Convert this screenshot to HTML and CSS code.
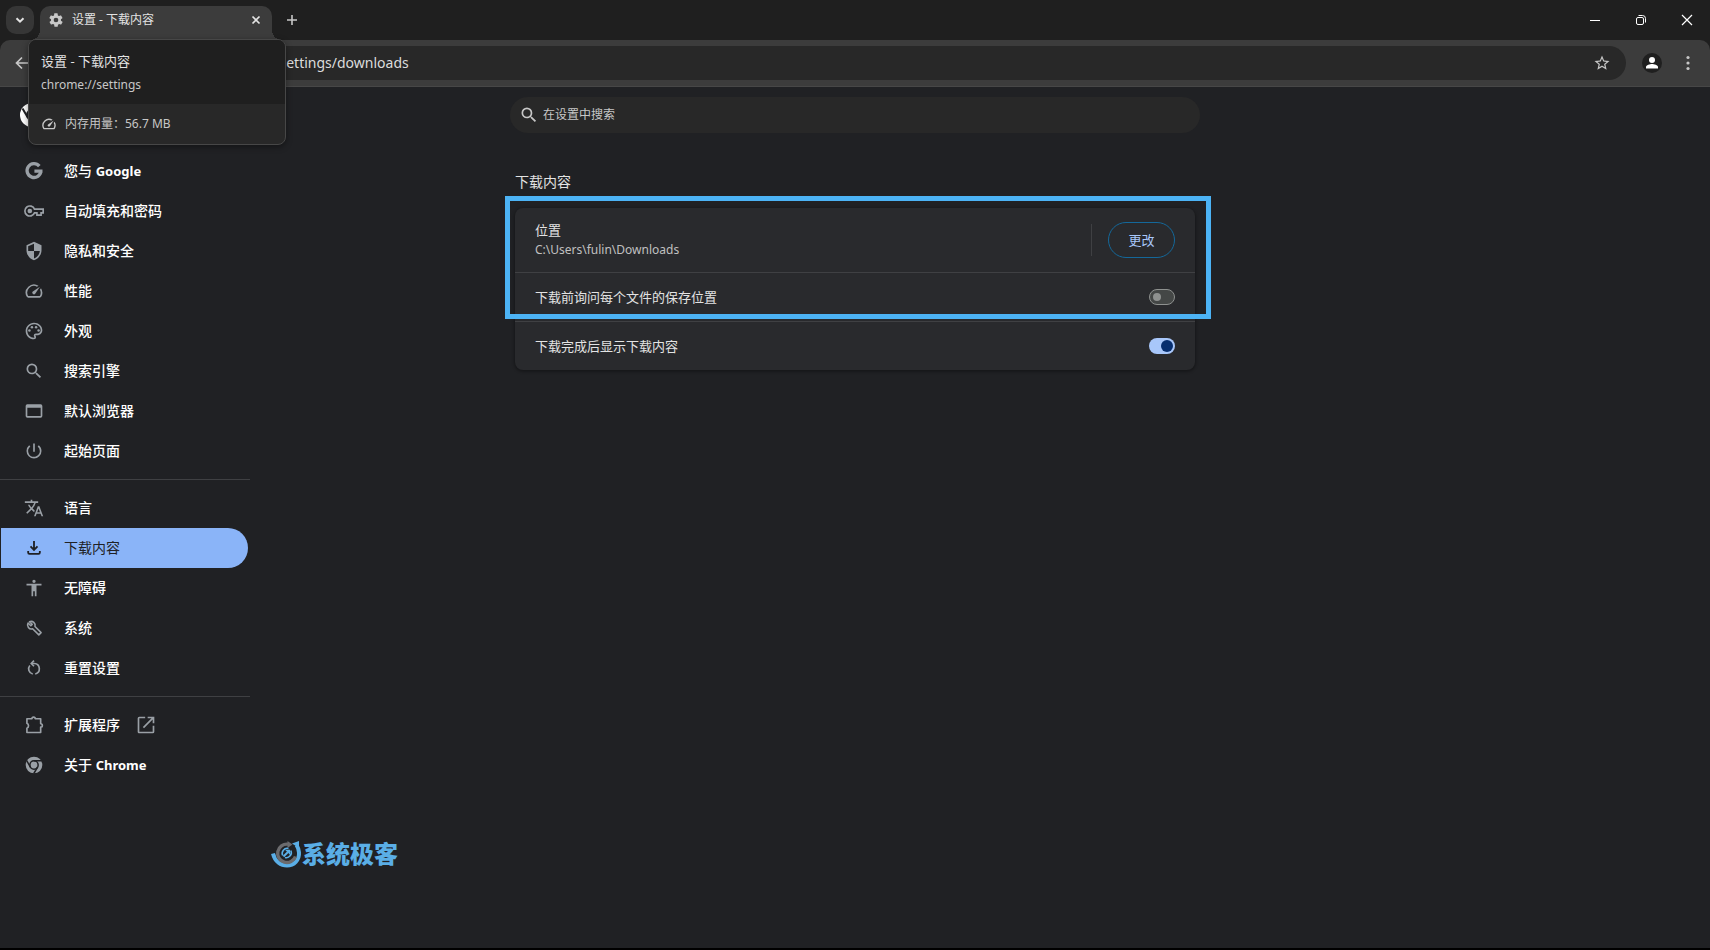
FILE: index.html
```html
<!DOCTYPE html>
<html lang="zh-CN">
<head>
<meta charset="utf-8">
<title>设置 - 下载内容</title>
<link rel="stylesheet" href="styles.css">
</head>
<body>
<div class="window">
  <header class="tabstrip">
    <button class="tab-search" aria-label="搜索标签页"><svg width="16" height="16" viewBox="0 0 16 16"><path d="M4.500 6.200 8 9.700l3.500-3.500" fill="none" stroke="currentColor" stroke-width="2"/></svg></button>
    <div class="tab">
      <svg class="tab-icon" width="16" height="16" viewBox="0 0 24 24"><path fill="currentColor" d="M19.400 13c0-.3.1-.6.1-1s0-.7-.1-1l2.100-1.600c.2-.2.2-.4.1-.6l-2-3.500c-.1-.2-.4-.3-.6-.2l-2.500 1c-.5-.4-1.100-.7-1.700-1l-.4-2.600c0-.3-.2-.5-.5-.5h-4c-.2 0-.5.2-.5.4l-.4 2.700c-.6.2-1.100.6-1.700 1l-2.500-1c-.2-.1-.5 0-.6.200l-2 3.500c-.1.2-.1.5.1.6L4.600 11c0 .3-.1.6-.1 1s0 .7.1 1l-2.100 1.600c-.2.200-.2.400-.1.600l2 3.500c.1.200.4.300.6.200l2.500-1c.5.400 1.100.700 1.700 1l.4 2.700c0 .2.200.4.5.4h4c.2 0 .5-.2.5-.4l.4-2.700c.6-.2 1.100-.6 1.700-1l2.500 1c.2.100.5 0 .6-.2l2-3.500c.1-.2.1-.5-.1-.6L19.400 13zM12 15.500a3.500 3.500 0 1 1 0-7 3.500 3.500 0 0 1 0 7z"/></svg>
      <span class="tab-title">设置 - 下载内容</span>
      <button class="plain tab-close" aria-label="关闭标签页"><svg width="16" height="16" viewBox="0 0 16 16"><path d="M4.500 4.500l7 7m0-7-7 7" stroke="currentColor" stroke-width="1.700"/></svg></button>
    </div>
    <button class="plain new-tab" aria-label="新标签页"><svg width="16" height="16" viewBox="0 0 16 16"><path d="M8 3v10M3 8h10" stroke="currentColor" stroke-width="1.600"/></svg></button>
    <div class="window-controls">
      <button class="plain" aria-label="最小化"><svg width="12" height="12" viewBox="0 0 12 12"><path d="M1 6.500h10" stroke="currentColor"/></svg></button>
      <button class="plain" aria-label="还原"><svg width="12" height="12" viewBox="0 0 12 12" fill="none" stroke="currentColor"><rect x="1.500" y="3.500" width="7" height="7" rx="1.500"/><path d="M3.500 1.500h4a3 3 0 0 1 3 3v4"/></svg></button>
      <button class="plain" aria-label="关闭"><svg width="12" height="12" viewBox="0 0 12 12"><path d="M1 1l10 10M11 1 1 11" stroke="currentColor" stroke-width="1.200"/></svg></button>
    </div>
  </header>

  <div class="toolbar">
    <button class="plain back" aria-label="返回"><svg width="16" height="16" viewBox="0 0 16 16"><path d="M14 8H2.500M8 2.500 2.500 8 8 13.500" fill="none" stroke="currentColor" stroke-width="1.700"/></svg></button>
    <div class="omnibox">
      <input class="address" type="text" aria-label="地址" value="chrome://settings/downloads">
      <button class="plain" aria-label="收藏"><svg width="18" height="18" viewBox="0 0 24 24"><path fill="currentColor" d="M22 9.240l-7.190-.62L12 2 9.190 8.630 2 9.240l5.460 4.730L5.820 21 12 17.270 18.180 21l-1.630-7.030L22 9.240zM12 15.400l-3.760 2.270 1-4.280-3.320-2.880 4.380-.38L12 6.100l1.710 4.040 4.380.38-3.320 2.880 1 4.280L12 15.400z"/></svg></button>
    </div>
    <button class="plain profile" aria-label="个人资料"><svg width="20" height="20" viewBox="0 0 20 20"><circle cx="10" cy="10" r="10" fill="#1f1f1f"/><g fill="#fff"><circle cx="10" cy="7" r="3"/><path d="M4 15.500v-1.500c0-2 4-3 6-3s6 1 6 3v1.500z"/></g></svg></button>
    <button class="plain menu" aria-label="菜单"><svg width="16" height="16" viewBox="0 0 16 16" fill="currentColor"><circle cx="8" cy="2.500" r="1.600"/><circle cx="8" cy="8" r="1.600"/><circle cx="8" cy="13.500" r="1.600"/></svg></button>
  </div>

  <div class="page">
    <aside class="sidebar">
      <div class="brand"><svg width="24" height="24" viewBox="0 0 24 24"><circle cx="12" cy="12" r="12" fill="#fff"/><path d="M2.500 5.500 7.500 14M12 7h11" stroke="#202124" stroke-width="2"/><circle cx="12" cy="12" r="5" fill="#fff" stroke="#202124" stroke-width="2"/></svg></div>
      <nav class="nav">
        <a href="#people"><svg viewBox="0 0 24 24"><path fill="none" stroke="currentColor" stroke-width="4" d="M18.400 6.200A8.300 8.300 0 1 0 20.300 12M22.200 12.200H12.500"/></svg><span>您与 <b>Google</b></span></a>
        <a href="#autofill"><svg viewBox="0 0 24 24"><g fill="none" stroke="currentColor" stroke-width="2"><path d="M12.600 9.700A6 6 0 1 0 12.600 14.300H15.500V17h5v-2.700H23V9.700z"/></g><circle cx="7" cy="12" r="2.800" fill="currentColor"/></svg><span>自动填充和密码</span></a>
        <a href="#privacy"><svg viewBox="0 0 24 24"><path fill="currentColor" d="M12 1 3 5v6c0 5.550 3.840 10.740 9 12 5.160-1.260 9-6.450 9-12V5l-9-4zm0 10.990h7c-.53 4.120-3.280 7.790-7 8.940V12H5V6.300l7-3.110v8.800z"/></svg><span>隐私和安全</span></a>
        <a href="#performance"><svg viewBox="0 0 24 24"><path fill="currentColor" d="M20.380 8.570l-1.230 1.850a8 8 0 0 1-.22 7.580H5.070A8 8 0 0 1 15.580 6.850l1.850-1.230A10 10 0 0 0 3.350 19a2 2 0 0 0 1.720 1h13.850a2 2 0 0 0 1.740-1 10 10 0 0 0-.27-10.440zm-9.790 6.840a2 2 0 0 0 2.830 0l5.660-8.490-8.490 5.660a2 2 0 0 0 0 2.830z"/></svg><span>性能</span></a>
        <a href="#appearance"><svg viewBox="0 0 24 24"><path fill="currentColor" d="M12 22C6.490 22 2 17.510 2 12S6.490 2 12 2s10 4.040 10 9c0 3.310-2.690 6-6 6h-1.770c-.28 0-.5.22-.5.5 0 .12.050.23.130.33.41.47.64 1.060.64 1.670A2.500 2.500 0 0 1 12 22zm0-18c-4.410 0-8 3.590-8 8s3.590 8 8 8c.28 0 .5-.22.5-.5a.54.54 0 0 0-.14-.35c-.41-.46-.63-1.050-.63-1.650a2.500 2.500 0 0 1 2.500-2.500H16c2.210 0 4-1.790 4-4 0-3.860-3.590-7-8-7z"/><g fill="currentColor"><circle cx="6.500" cy="11.500" r="1.500"/><circle cx="9.500" cy="7.500" r="1.500"/><circle cx="14.500" cy="7.500" r="1.500"/><circle cx="17.500" cy="11.500" r="1.500"/></g></svg><span>外观</span></a>
        <a href="#search"><svg viewBox="0 0 24 24"><path fill="currentColor" d="M15.500 14h-.79l-.28-.27A6.471 6.471 0 0 0 16 9.500 6.500 6.500 0 1 0 9.500 16c1.610 0 3.090-.59 4.230-1.570l.27.28v.79l5 4.990L20.490 19l-4.990-5zm-6 0C7.010 14 5 11.990 5 9.500S7.010 5 9.500 5 14 7.010 14 9.500 11.990 14 9.500 14z"/></svg><span>搜索引擎</span></a>
        <a href="#default"><svg viewBox="0 0 24 24"><path fill="currentColor" d="M20 4H4a2 2 0 0 0-2 2v12a2 2 0 0 0 2 2h16a2 2 0 0 0 2-2V6a2 2 0 0 0-2-2zm0 14H4V8h16v10z"/></svg><span>默认浏览器</span></a>
        <a href="#startup"><svg viewBox="0 0 24 24"><path fill="currentColor" d="M13 3h-2v10h2V3zm4.830 2.170-1.420 1.420A6.920 6.920 0 0 1 19 12c0 3.870-3.130 7-7 7A6.995 6.995 0 0 1 7.580 6.580L6.170 5.170A8.932 8.932 0 0 0 3 12a9 9 0 0 0 18 0c0-2.740-1.230-5.180-3.170-6.830z"/></svg><span>起始页面</span></a>
        <hr>
        <a href="#languages"><svg viewBox="0 0 24 24"><path fill="currentColor" d="M12.870 15.070l-2.540-2.510.03-.03A17.520 17.520 0 0 0 14.070 6H17V4h-7V2H8v2H1v1.990h11.170C11.500 7.920 10.440 9.750 9 11.350 8.070 10.320 7.300 9.190 6.690 8h-2c.73 1.630 1.730 3.170 2.980 4.560l-5.090 5.020L4 19l5-5 3.110 3.110.76-2.040zM18.500 10h-2L12 22h2l1.120-3h4.750L21 22h2l-4.500-12zm-2.620 7l1.620-4.330L19.120 17h-3.240z"/></svg><span>语言</span></a>
        <a class="selected" href="#downloads" aria-current="page"><svg viewBox="0 0 24 24"><path fill="none" stroke="currentColor" stroke-width="2.200" d="M12 3.500v10.500M7.800 10l4.200 4.200 4.200-4.200M5 15.500v2A1.500 1.500 0 0 0 6.500 19h11a1.500 1.500 0 0 0 1.500-1.500v-2"/></svg><span>下载内容</span></a>
        <a href="#a11y"><svg viewBox="0 0 24 24"><path fill="currentColor" d="M12 2a2 2 0 1 1 0 4 2 2 0 0 1 0-4zm9 7h-6v13h-2v-6h-2v6H9V9H3V7h18v2z"/></svg><span>无障碍</span></a>
        <a href="#system"><svg viewBox="0 0 24 24"><path fill="none" stroke="currentColor" stroke-width="1.900" stroke-linejoin="round" d="M4.800 6 8.200 9.300 9.800 7.700 6.600 4.500A4.800 4.800 0 0 1 13.200 10.200L20.500 17.600 17.800 20.300 10.300 12.900A4.800 4.800 0 0 1 4.800 6z"/></svg><span>系统</span></a>
        <a href="#reset"><svg viewBox="0 0 24 24"><g fill="none" stroke="currentColor" stroke-width="2"><path d="M9.500 6.600H12.500a6.400 6.400 0 0 1 1 12.600M10.500 19.200A6.400 6.400 0 0 1 7 8.900"/><path d="M12 3.200 8.700 6.600l3.300 3.300"/></g></svg><span>重置设置</span></a>
        <hr>
        <a href="#extensions"><svg viewBox="0 0 24 24"><path fill="none" stroke="currentColor" stroke-width="2" stroke-linejoin="round" d="M3.500 4.500h6a1.800 1.800 0 0 1 4 0H20v6a1.900 1.900 0 0 1 0 4V21H3.500v-5a3.300 3.300 0 0 0 0-6z"/></svg><span>扩展程序</span><svg class="external" viewBox="0 0 24 24"><path fill="currentColor" d="M20 20H4V4h7V2H4a2 2 0 0 0-2 2v16c0 1.100.89 2 2 2h16a2 2 0 0 0 2-2v-7h-2v7zM14 2v2h4.600L8.200 14.400l1.400 1.400L20 5.400V10h2V2h-8z"/></svg></a>
        <a href="#about"><svg viewBox="0 0 24 24"><circle cx="12" cy="12" r="10" fill="currentColor"/><circle cx="12" cy="12" r="5" fill="none" stroke="#202124" stroke-width="1.800"/><path stroke="#202124" stroke-width="1.800" d="M12 7h9.500M7.700 14.500 3 6.300M16.300 14.500l-4.700 8"/></svg><span>关于 <b>Chrome</b></span></a>
      </nav>
    </aside>

    <main class="content">
      <label class="search">
        <svg width="20" height="20" viewBox="0 0 24 24"><path fill="currentColor" d="M15.500 14h-.79l-.28-.27A6.471 6.471 0 0 0 16 9.500 6.500 6.500 0 1 0 9.500 16c1.610 0 3.090-.59 4.230-1.570l.27.28v.79l5 4.990L20.490 19l-4.990-5zm-6 0C7.010 14 5 11.990 5 9.500S7.010 5 9.500 5 14 7.010 14 9.500 11.990 14 9.500 14z"/></svg>
        <input type="search" placeholder="在设置中搜索" aria-label="在设置中搜索">
      </label>
      <section class="section">
        <h1>下载内容</h1>
        <div class="card">
          <div class="row row-location">
            <div class="location"><div>位置</div><div class="path">C:\Users\fulin\Downloads</div></div>
            <div class="action"><button class="change">更改</button></div>
          </div>
          <div class="row">
            <label for="ask">下载前询问每个文件的保存位置</label>
            <input class="toggle" type="checkbox" role="switch" id="ask">
          </div>
          <div class="row">
            <label for="show">下载完成后显示下载内容</label>
            <input class="toggle" type="checkbox" role="switch" id="show" checked>
          </div>
          <div class="highlight"></div>
        </div>
      </section>
    </main>
  </div>

  <div class="hovercard" role="tooltip">
    <div class="hover-main"><div class="hover-title">设置 - 下载内容</div><div class="hover-url">chrome://settings</div></div>
    <div class="hover-memory"><svg width="16" height="16" viewBox="0 0 24 24"><path fill="currentColor" d="M20.380 8.570l-1.230 1.850a8 8 0 0 1-.22 7.580H5.070A8 8 0 0 1 15.580 6.850l1.850-1.230A10 10 0 0 0 3.350 19a2 2 0 0 0 1.720 1h13.850a2 2 0 0 0 1.740-1 10 10 0 0 0-.27-10.440zm-9.790 6.840a2 2 0 0 0 2.830 0l5.660-8.490-8.490 5.660a2 2 0 0 0 0 2.830z"/></svg><span>内存用量：56.7 MB</span></div>
  </div>

  <div class="watermark">
    <svg width="32" height="28" viewBox="0 0 32 28" fill="none"><path d="M3 13.500C5 22 11 25.500 17 25.500C24 25.500 29.500 20 29 12.500C28.800 9.500 27.800 7 26.500 5" stroke="#5aaee6" stroke-width="4"/><path d="M22 3.500 29 1v7z" fill="#5aaee6"/><path d="M18 4.200A9.200 9.200 0 1 0 25.500 16.500" stroke="#6b6b6e" stroke-width="3.400"/><path d="M17.500 1l5 3.500-5 3.500z" fill="#6b6b6e"/><path d="M12.700 15.500A5 5 0 0 1 18.500 8.500M20.800 10.500A5 5 0 0 1 15 17.500" stroke="#5aaee6" stroke-width="1.600"/><path d="M13.500 16.500l4.500-4.500" stroke="#5aaee6" stroke-width="2"/><path d="M15 9.800h5v5z" fill="#5aaee6"/></svg>
    <span>系统极客</span>
  </div>
</div>
</body>
</html>
```

FILE: styles.css
```css
* { box-sizing: border-box; }
body {
  margin: 0;
  background: #000;
  color: #e3e3e3;
  font: 13px/20px "Noto Sans", "Noto Sans CJK SC", sans-serif;
}
svg { flex: none; display: block; }
button, input { font: inherit; color: inherit; }
.plain {
  display: flex;
  align-items: center;
  justify-content: center;
  padding: 0;
  border: 0;
  background: none;
}
.window {
  position: relative;
  display: flex;
  flex-direction: column;
  min-height: calc(100vh - 2px);
  background: #202124;
}

/* Tab strip */
.tabstrip {
  display: flex;
  align-items: center;
  height: 40px;
  padding-left: 6px;
  background: #1f1f1f;
}
.tab-search {
  display: flex;
  align-items: center;
  justify-content: center;
  width: 28px;
  height: 28px;
  padding: 0;
  border: 0;
  border-radius: 10px;
  background: #363636;
}
.tab {
  position: relative;
  display: flex;
  align-items: center;
  align-self: flex-end;
  gap: 8px;
  width: 232px;
  height: 34px;
  margin-left: 6px;
  padding: 0 8px 6px;
  border-radius: 10px 10px 0 0;
  background: #3c3c3c;
  font-size: 12px;
}
.tab::before, .tab::after {
  content: "";
  position: absolute;
  bottom: 0;
  width: 10px;
  height: 10px;
}
.tab::before { right: 100%; background: radial-gradient(circle at 0 0, transparent 10px, #3c3c3c 10px); }
.tab::after { left: 100%; background: radial-gradient(circle at 100% 0, transparent 10px, #3c3c3c 10px); }
.tab-icon { color: #c7c7c7; }
.tab-title { flex: 1; }
.new-tab { width: 28px; height: 28px; margin-left: 6px; color: #c7c7c7; }
.window-controls { display: flex; align-self: stretch; margin-left: auto; color: #fff; }
.window-controls .plain { width: 46px; }

/* Toolbar */
.toolbar {
  display: flex;
  align-items: center;
  height: 47px;
  padding: 0 14px 1px;
  border-bottom: 1px solid #474747;
  border-radius: 10px 10px 0 0;
  background: #3c3c3c;
  color: #c7c7c7;
}
.omnibox {
  display: flex;
  align-items: center;
  flex: 1;
  height: 34px;
  margin-left: 90px;
  padding: 0 15px 0 95px;
  border-radius: 17px;
  background: #282828;
}
.address {
  flex: 1;
  min-width: 0;
  padding: 0;
  border: 0;
  outline: 0;
  background: none;
  color: #dcdcdc;
  font-size: 14px;
}
.profile { margin-left: 16px; }
.menu { margin-left: 18px; }

/* Page */
.page {
  display: grid;
  grid-template-columns: 250px minmax(0, 1fr) 250px;
}
.brand { display: flex; align-items: center; height: 64px; padding: 0 20px 8px; }
.nav { display: flex; flex-direction: column; }
.nav a {
  display: flex;
  align-items: center;
  height: 40px;
  margin: 0 2px 0 1px;
  padding-left: 23px;
  border-radius: 0 20px 20px 0;
  color: #fff;
  font-size: 14px;
  font-weight: 500;
  text-decoration: none;
}
.nav svg { width: 20px; height: 20px; color: #9aa0a6; }
.nav a span { margin-left: 20px; }
.nav b { font-size: 13px; font-weight: 700; }
.nav .external { margin-left: 16px; }
.nav hr { width: 100%; height: 1px; margin: 8px 0; border: 0; background: #3f4043; }
.nav .selected { background: #8ab4f8; color: #202124; font-weight: 400; }
.nav .selected svg { color: #202124; }

.content { padding: 10px 20px; }
.search {
  display: flex;
  align-items: center;
  gap: 4px;
  max-width: 690px;
  height: 36px;
  margin: 0 auto;
  padding: 0 9px;
  border-radius: 18px;
  background: #282828;
  color: #c7c7c7;
  font-size: 12px;
}
.search input { flex: 1; padding: 0; border: 0; outline: 0; background: none; }
.search input::placeholder { color: #c7c7c7; opacity: 1; }
.section { max-width: 680px; margin: 39px auto 0; }
h1 { margin: 0 0 16px; font-size: 14px; font-weight: 400; line-height: 20px; }
.card {
  position: relative;
  border-radius: 8px;
  background: #292a2d;
  box-shadow: 0 1px 3px 1px rgba(0, 0, 0, .3);
}
.row {
  display: flex;
  align-items: center;
  justify-content: space-between;
  min-height: 48px;
  padding: 0 20px;
}
.row + .row { border-top: 1px solid #3f4043; min-height: 49px; }
.row-location { min-height: 64px; }
.path { color: #c0c0c0; font-size: 12px; }
.action { display: flex; align-items: center; height: 32px; padding-left: 16px; border-left: 1px solid #3f4043; }
.change {
  width: 67px;
  height: 36px;
  padding: 0;
  border: 1px solid #14689a;
  border-radius: 18px;
  background: none;
  color: #a8c7fa;
}
.toggle {
  appearance: none;
  display: flex;
  align-items: center;
  width: 26px;
  height: 16px;
  margin: 0;
  padding: 0 3px;
  border: 1px solid #8e918f;
  border-radius: 8px;
  background: #444746;
}
.toggle::before { content: ""; width: 8px; height: 8px; border-radius: 50%; background: #8e918f; }
.toggle:checked { justify-content: flex-end; padding: 0 2px; border: 0; background: #a8c7fa; }
.toggle:checked::before { width: 12px; height: 12px; background: #062e6f; }
.highlight {
  position: absolute;
  top: -12px;
  right: -16px;
  left: -10px;
  height: 123px;
  border: 5px solid #4cb3f5;
  pointer-events: none;
}

/* The strip's colour shows behind the toolbar's rounded corners */
.window { background: linear-gradient(#1f1f1f 60px, #202124 60px); }

/* Tab hover card */
.hovercard {
  position: absolute;
  z-index: 2;
  top: 39px;
  left: 28px;
  width: 258px;
  border: 1px solid #474747;
  border-radius: 8px;
  background: #282828;
  overflow: hidden;
  box-shadow: 0 2px 6px rgba(0, 0, 0, .4);
}
.hover-main { padding: 10px 12px 8px; background: #1f1f1f; line-height: 23px; }
.hover-url { color: #c7c7c7; font-size: 12px; }
.hover-memory { display: flex; align-items: center; gap: 8px; height: 40px; padding: 0 12px; color: #c7c7c7; font-size: 12px; }

.watermark {
  position: absolute;
  bottom: 76px;
  left: 270px;
  display: flex;
  align-items: center;
  color: #5aaee6;
  font-size: 24px;
  font-weight: 900;
  line-height: 36px;
}
```
